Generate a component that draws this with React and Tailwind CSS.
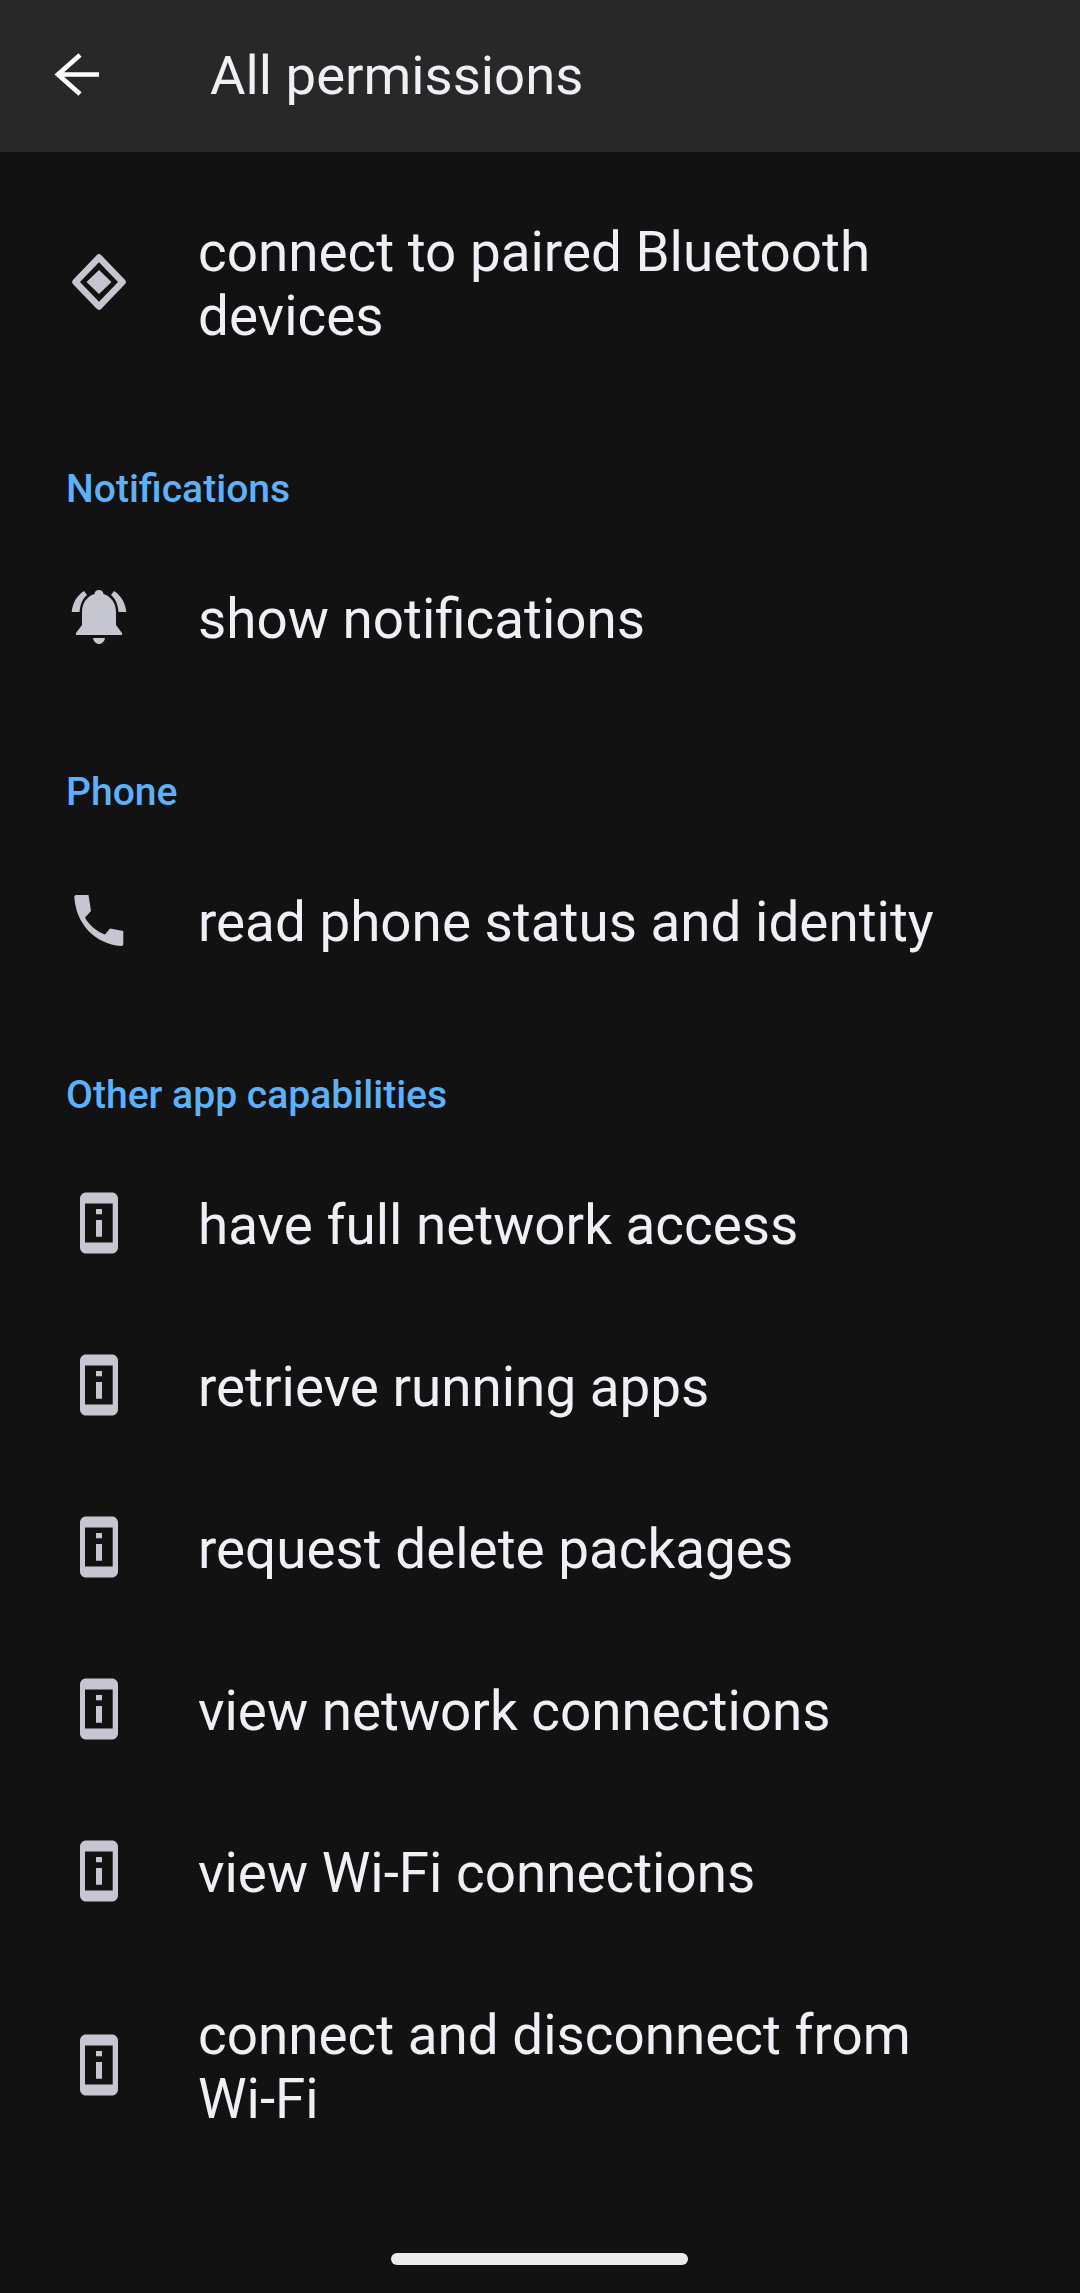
const font = { fontFamily: "Roboto, sans-serif" };

function DiamondIcon() {
  return (
    <svg width="58" height="58" viewBox="0 0 58 58" fill="none">
      <path d="M29 4.500 L52.500 29 L29 53.500 L5.500 29 Z" stroke="#c6c6d0" strokeWidth="6.500" strokeLinejoin="round" />
      <path d="M29 17 L41.500 29 L29 41 L16.500 29 Z" fill="#c6c6d0" />
    </svg>
  );
}

function BellIcon() {
  return (
    <svg width="58" height="58" viewBox="0 0 58 58" fill="#c6c6d0">
      <path d="M29 2c2.500 0 4.200 1.600 4.500 4C41 8.500 46 15 46 24v13l6 8v2H6v-2l6-8V24c0-9 5-15.500 12.500-18C24.800 3.600 26.500 2 29 2z" />
      <path d="M23 50h12c-.6 3.500-3 6-6 6s-5.400-2.500-6-6z" />
      <path d="M1.700 24C2.500 15 7 7.500 14 3l3 4c-4.500 3.500-7 10-7.500 17z" />
      <path d="M56.300 24C55.500 15 51 7.500 44 3l-3 4c4.500 3.500 7 10 7.500 17z" />
    </svg>
  );
}

function PhoneIcon() {
  return (
    <svg width="58" height="58" viewBox="0 0 58 58" fill="#c6c6d0">
      <path d="M6 4h12.500L21 20l-6 6.500c3.500 7 12 14.500 20 17l5-6 13.300 2.500v13c0 1.500-1 2-2.300 2C25 53 6 33 4.300 6 4.300 5 5 4 6 4z" />
    </svg>
  );
}

function InfoIcon() {
  return (
    <svg width="58" height="62" viewBox="0 0 58 62" fill="#c6c6d0">
      <path
        fillRule="evenodd"
        d="M16 .5h26c3.300 0 6 2.700 6 6v49c0 3.300-2.700 6-6 6H16c-3.300 0-6-2.700-6-6v-49c0-3.300 2.700-6 6-6zM15 11.500v39h27.700v-39H15zM26 17h6v5.300h-6zM26 28h6v16.700h-6z"
      />
    </svg>
  );
}

function Row({ icon, children }) {
  return (
    <div className="flex items-center pl-[70px] pr-[100px] py-[49px]">
      <div className="w-[58px] shrink-0 flex items-center justify-center">{icon}</div>
      <p className="ml-[70px] text-[54.8px] leading-[64px] pt-[2px] -mb-[2px] text-[#eff0f5]">{children}</p>
    </div>
  );
}

function Section({ title, children }) {
  return (
    <>
      <h2 className="pt-[71px] pb-[24px] text-[39.1px] leading-[46px] font-medium text-[#5eb1f8] pl-[66px]">{title}</h2>
      {children}
    </>
  );
}

export default function App() {
  return (
    <div className="w-[1080px] h-[2293px] bg-[#121212] relative overflow-hidden" style={font}>
      <header className="h-[152px] bg-[#282828] flex items-center">
        <svg className="ml-[54px] mb-[2px]" width="46" height="46" viewBox="0 0 46 46" fill="none" stroke="#ffffff" strokeWidth="4.700">
          <path d="M45 22.500H5" />
          <path d="M26 3 L4 22.500 L26 42" />
        </svg>
        <h1 className="ml-[110px] mb-[2px] text-[54.5px] leading-[64px] text-[#eff0f5]">All permissions</h1>
      </header>

      <div className="pt-[17px]">
        <Row icon={<DiamondIcon />}>connect to paired Bluetooth devices</Row>
        <Section title="Notifications">
          <Row icon={<BellIcon />}>show notifications</Row>
        </Section>
        <Section title="Phone">
          <Row icon={<PhoneIcon />}>read phone status and identity</Row>
        </Section>
        <Section title="Other app capabilities">
          <Row icon={<InfoIcon />}>have full network access</Row>
          <Row icon={<InfoIcon />}>retrieve running apps</Row>
          <Row icon={<InfoIcon />}>request delete packages</Row>
          <Row icon={<InfoIcon />}>view network connections</Row>
          <Row icon={<InfoIcon />}>view Wi-Fi connections</Row>
          <Row icon={<InfoIcon />}>connect and disconnect from Wi-Fi</Row>
        </Section>
      </div>

      <div className="absolute left-[391px] top-[2253px] w-[297px] h-[12px] rounded-full bg-[#ebebeb]" />
    </div>
  );
}
